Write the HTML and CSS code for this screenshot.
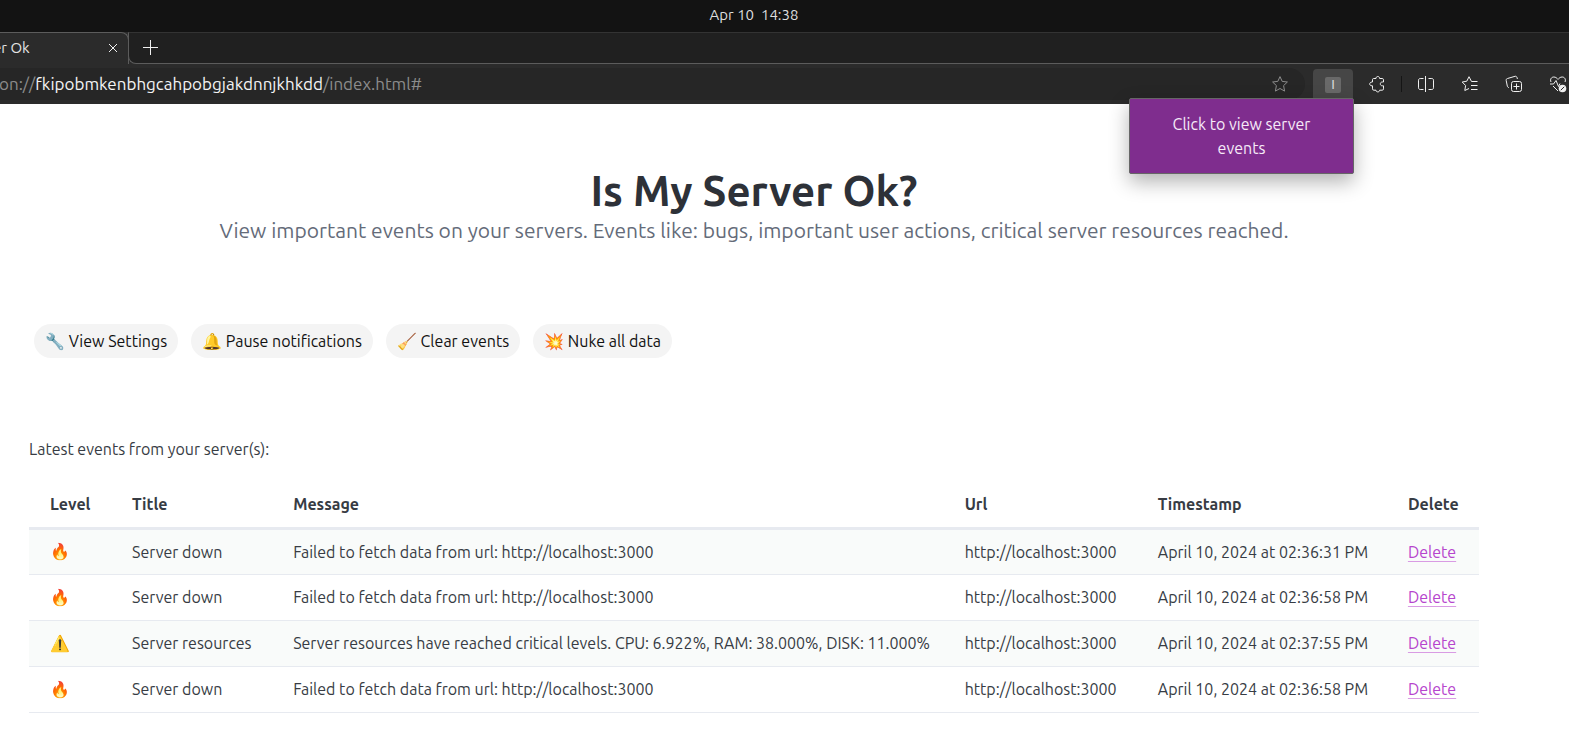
FILE: index.html
```html
<!DOCTYPE html>
<html lang="en">
<head>
<meta charset="utf-8">
<title>Is My Server Ok?</title>
<link rel="stylesheet" href="styles.css">
</head>
<body>
<div class="system-bar"><time>Apr 10&nbsp; 14:38</time></div>
<div class="tab-strip">
  <div class="tab">
    <span class="tab-title">er Ok</span>
    <button class="icon-button tab-close" aria-label="Close tab"><svg width="10" height="10" viewBox="0 0 10 10"><path d="M1 1l8 8M9 1l-8 8"/></svg></button>
  </div>
  <div class="tab-rest"><button class="icon-button" aria-label="New tab"><svg width="15" height="15" viewBox="0 0 15 15"><path d="M7.500 0v15M0 7.500h15"/></svg></button></div>
</div>
<div class="toolbar">
  <div class="address">
    <div class="url">on://<span class="host">fkipobmkenbhgcahpobgjakdnnjkhkdd</span>/index.html#</div>
    <button class="icon-button star" aria-label="Add to favorites"><svg width="18" height="18" viewBox="0 0 18 18"><path d="M9 1.600l2.200 4.800 5.200.6-3.800 3.600 1 5.500L9 13.500l-4.600 2.600 1-5.500L1.600 7l5.200-.6z"/></svg></button>
  </div>
  <div class="extension">
    <button class="extension-button" aria-label="Is My Server Ok?"><span class="extension-mark">I</span></button>
    <div class="tooltip" role="tooltip">Click to view server events</div>
  </div>
  <div class="tools">
    <button class="icon-button" aria-label="Extensions"><svg width="18" height="18" viewBox="0 0 18 18"><path d="M5.500 3.500H8c0-1.300.7-2 1.800-2s1.800.7 1.800 2h2.600c.8 0 1.300.5 1.300 1.200V7h-1.200c-1.200 0-2 .8-2 1.900s.8 1.900 2 1.900h1.200v3c0 .9-.4 1.400-1.300 1.400h-2.600c0 1-.7 1.700-1.800 1.700S8 16.200 8 15.200H5.800c-.8 0-1.300-.5-1.300-1.400v-3H4C2.600 10.800 1.700 10 1.700 9S2.600 7 4 7h.5V4.700c0-.7.400-1.200 1-1.200z"/></svg></button>
    <span class="divider"></span>
    <button class="icon-button" aria-label="Split screen"><svg width="18" height="18" viewBox="0 0 18 18"><path d="M6.500 3.500H3.200c-1 0-1.700.7-1.700 1.700v7.600c0 1 .7 1.700 1.700 1.700h3.300M11.500 3.500h3.300c1 0 1.700.7 1.700 1.700v7.600c0 1-.7 1.700-1.700 1.700h-3.300M8.500 1v16"/></svg></button>
    <button class="icon-button" aria-label="Favorites"><svg width="18" height="18" viewBox="0 0 18 18"><path d="M16.500 6.500h-6L8 1.700 5.800 6.200 1.200 7l3.400 3.500-.8 5 4.200-2M10 10.500h6.500M10 14.500h6.500"/></svg></button>
    <button class="icon-button" aria-label="Collections"><svg width="18" height="18" viewBox="0 0 18 18"><path d="M4 12.500c-1 0-1.500-.6-1.700-1.500L1.200 5.500C1 4.400 1.500 3.700 2.500 3.500L10 1.300c1-.2 1.700.2 2 1.200l.4 1.500"/><rect x="6.500" y="6.500" width="10" height="10" rx="2"/><path d="M11.500 8.500v6M8.500 11.500h6"/></svg></button>
    <button class="icon-button" aria-label="Browser essentials"><svg width="18" height="18" viewBox="0 0 18 18"><path d="M2 7C.8 4.200 2.500 2 4.800 2 6.800 2 8 3.200 9 4.400 10 3.200 11.200 2 13.200 2c2.300 0 4 2.200 2.800 5M1 9h3.500L7 5.500l2.500 6L11 8.500M4 11l5 5"/><circle class="solid" cx="13.500" cy="13.500" r="3.800"/><path class="cut" d="M11.800 15.200l3.400-3.400"/></svg></button>
  </div>
</div>
<main class="page">
  <header class="hero">
    <h1>Is My Server Ok?</h1>
    <p>View important events on your servers. Events like: bugs, important user actions, critical server resources reached.</p>
  </header>
  <div class="actions">
    <button class="pill">🔧 View Settings</button>
    <button class="pill">🔔 Pause notifications</button>
    <button class="pill">🧹 Clear events</button>
    <button class="pill">💥 Nuke all data</button>
  </div>
  <p class="caption" id="events-caption">Latest events from your server(s):</p>
  <table class="events" aria-labelledby="events-caption">
    <colgroup><col class="c-level"><col class="c-title"><col class="c-message"><col class="c-url"><col class="c-time"><col class="c-delete"></colgroup>
    <thead><tr><th>Level</th><th>Title</th><th>Message</th><th>Url</th><th>Timestamp</th><th>Delete</th></tr></thead>
    <tbody>
      <tr><td>🔥</td><td>Server down</td><td>Failed to fetch data from url: http://localhost:3000</td><td>http://localhost:3000</td><td>April 10, 2024 at 02:36:31 PM</td><td><a href="#">Delete</a></td></tr>
      <tr><td>🔥</td><td>Server down</td><td>Failed to fetch data from url: http://localhost:3000</td><td>http://localhost:3000</td><td>April 10, 2024 at 02:36:58 PM</td><td><a href="#">Delete</a></td></tr>
      <tr><td>⚠️</td><td>Server resources</td><td>Server resources have reached critical levels. CPU: 6.922%, RAM: 38.000%, DISK: 11.000%</td><td>http://localhost:3000</td><td>April 10, 2024 at 02:37:55 PM</td><td><a href="#">Delete</a></td></tr>
      <tr><td>🔥</td><td>Server down</td><td>Failed to fetch data from url: http://localhost:3000</td><td>http://localhost:3000</td><td>April 10, 2024 at 02:36:58 PM</td><td><a href="#">Delete</a></td></tr>
    </tbody>
  </table>
</main>
</body>
</html>
```
FILE: styles.css
```css
* { box-sizing: border-box; }
body {
  margin: 0;
  background: #fff;
  color: #373c44;
  font-family: Ubuntu, "Noto Sans", "Open Sans", sans-serif;
  font-size: 16px;
  overflow-x: hidden;
}
button { font: inherit; border: 0; cursor: pointer; }
svg { display: block; fill: none; stroke: currentColor; stroke-width: 1; stroke-linejoin: round; }
.solid { fill: currentColor; stroke: none; }
.cut { stroke: #2b2b2b; }

.system-bar {
  height: 32px;
  padding-right: 61px;
  background: #131313;
  color: #dedede;
  font-size: 15px;
  line-height: 30px;
  text-align: center;
}
.icon-button {
  flex: none;
  padding: 0;
  background: none;
  color: #f0f0f0;
}
.tab-strip {
  display: flex;
  height: 32px;
  background: #2b2b2b;
}
.tab {
  display: flex;
  align-items: center;
  justify-content: space-between;
  width: 129px;
  padding: 0 10px 2px 0;
  border-top: 1px solid #5c5c5c;
  border-right: 1px solid #5c5c5c;
  border-top-right-radius: 8px;
  background: #2b2b2b;
  color: #e4e4e4;
  font-size: 15px;
}
.tab-title { margin-left: -7px; }
.tab-rest {
  display: flex;
  flex: 1;
  align-items: center;
  margin-left: -1px;
  padding: 0 0 1px 14px;
  border: 1px solid #5c5c5c;
  border-top-color: #333;
  border-right: 0;
  border-bottom-left-radius: 8px;
  background: #202020;
}
.toolbar {
  display: flex;
  align-items: center;
  height: 40px;
  background: #2b2b2b;
}
.address {
  display: flex;
  flex: 1;
  align-items: center;
  justify-content: space-between;
  height: 32px;
  padding-right: 16px;
  border-radius: 0 16px 16px 0;
  background: #262626;
}
.url { margin-left: -1px; padding-bottom: 2px; color: #8c8c8c; font-size: 17px; }
.host { color: #f4f4f4; }
.star { color: #8c8c8c; }
.extension { position: relative; align-self: flex-end; margin-left: 8px; }
.extension-button {
  display: flex;
  align-items: center;
  justify-content: center;
  width: 40px;
  height: 35px;
  padding: 0 0 4px;
  border-radius: 4px 4px 0 0;
  background: #464646;
}
.extension-mark {
  width: 16px;
  height: 16px;
  border-radius: 2px;
  background: #696969;
  color: #ddd;
  font-family: "Liberation Sans", sans-serif;
  font-size: 13px;
  line-height: 16px;
}
.tooltip {
  position: absolute;
  top: 29px;
  right: -1px;
  z-index: 1;
  width: 225px;
  padding: 13px 32px;
  border: 1px solid #666;
  border-radius: 2px;
  background: #7f2d8e;
  box-shadow: 0 8px 20px rgba(0, 0, 0, .3);
  color: #f6eaf8;
  font-size: 16px;
  line-height: 24px;
  text-align: center;
}
.tools { display: flex; align-items: center; gap: 26px; margin: 0 2px 0 15px; }
.divider { width: 1px; height: 16px; margin: 0 -11px; background: #151515; }

.page { padding: 62px 90px 30px 29px; }
.hero { text-align: center; }
h1 {
  margin: 0;
  color: #2d3138;
  font-size: 42px;
  font-weight: 600;
  line-height: 50px;
}
.hero p {
  margin: 0;
  color: #646b79;
  font-size: 21px;
  font-weight: 400;
  line-height: 28px;
}
.actions { display: flex; gap: 13px; margin: 80px 5px 0; }
.pill {
  height: 34px;
  padding: 0 11px;
  border-radius: 17px;
  background: #f4f4f4;
  color: #111;
  white-space: nowrap;
}
.caption { margin: 79px 0 20px; line-height: 24px; }
.events {
  width: 100%;
  border-collapse: collapse;
  table-layout: fixed;
}
.c-level { width: 5.66%; }
.c-title { width: 11.11%; }
.c-message { width: 46.31%; }
.c-url { width: 13.32%; }
.c-time { width: 17.25%; }
.c-delete { width: 6.35%; }
th, td { padding: 0 0 0 21px; text-align: left; white-space: nowrap; }
th {
  height: 47px;
  border-bottom: 3px solid #e7eaf0;
  font-weight: 600;
}
td { height: 46px; border-bottom: 1px solid #e7eaf0; }
tbody tr:nth-child(odd) { background: #f9fbfa; }
a { color: #b645cd; text-decoration-color: #d99be4; text-underline-offset: 3px; }
```
